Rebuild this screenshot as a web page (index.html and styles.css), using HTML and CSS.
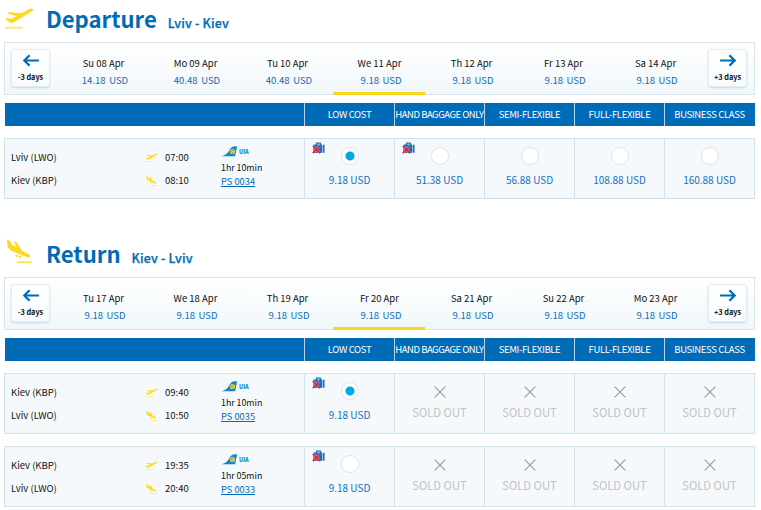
FILE: index.html
```html
<!DOCTYPE html>
<html lang="en">
<head>
  <meta charset="UTF-8">
  <meta name="viewport" content="width=device-width, initial-scale=1">
  <title>Select flights</title>
  <link rel="stylesheet" href="styles.css">
</head>
<body>

  <!-- Shared icons -->
  <svg class="sprite" aria-hidden="true">
    <symbol id="takeoff" viewBox="0 0 30 22">
      <path fill="#ffd91a" d="M2.7 5L5 4.300l12.500.9 7-4Q28-.3 29 1.200q.3 1.600-2.500 3L9.500 14.500l-3 .4L1 10.800l1.800-.9L7 11l5.500-2.800z"/>
      <path fill="#ffe873" d="M1 18.700h17.500v2H1z"/>
    </symbol>
    <symbol id="landing" viewBox="0 0 30 27">
      <path fill="#ffd91a" d="M3 1.500l1.700.2L8.300 7l4 1.800L10 3.200l2.400.7L18 13l6.500 3q2.300 1.800 1.300 3.200l-2 .3L6.500 12.500 3.600 9z"/>
      <circle cx="12.500" cy="17.700" r="1.200" fill="#ffd91a"/>
      <circle cx="16" cy="18.700" r="1.200" fill="#ffd91a"/>
      <path fill="#ffe04a" d="M12.700 23.500H28V25H12.700z"/>
    </symbol>
    <symbol id="arrow-left" viewBox="0 0 18 14">
      <path fill="none" stroke="#006bb7" stroke-width="2.4" d="M17.500 7H2M7.500 1.300L1.800 7l5.700 5.700"/>
    </symbol>
    <symbol id="arrow-right" viewBox="0 0 18 14">
      <path fill="none" stroke="#006bb7" stroke-width="2.4" d="M.5 7H16M10.500 1.300L16.200 7l-5.700 5.700"/>
    </symbol>
    <symbol id="no-bag" viewBox="0 0 13 13">
      <path fill="none" stroke="#1379c4" stroke-width="1.200" d="M4.500 3V1.100h4V3"/>
      <rect x="1.200" y="2.500" width="9.200" height="8.500" rx="1" fill="#0870bd"/>
      <path fill="#0a4f96" d="M11.200 2.800h1.300v8h-1.300z"/>
      <path stroke="#fff" stroke-width="2.600" opacity=".55" d="M.8 4l7 7M7.800 4l-7 7"/>
      <path stroke="#e41d2d" stroke-width="1.700" d="M.8 4l7.200 7.200M8 4L.8 11.200"/>
    </symbol>
    <symbol id="tail" viewBox="0 0 18 12">
      <path fill="#1686cf" d="M0 11.200Q6 10.500 9.800 3Q11.500.5 14 .3H17.300L15.200 11.200Z"/>
      <circle cx="12.200" cy="6" r="2.800" fill="#f4d93a"/>
      <path fill="none" stroke="#1686cf" stroke-width=".9" d="M13.300 5.200a1.300 1.300 0 1 0 0 1.700"/>
    </symbol>
    <symbol id="cross" viewBox="0 0 12 12">
      <path stroke="#999" stroke-width="1.100" d="M.7.7l10.600 10.600M11.300.7L.7 11.300"/>
    </symbol>
  </svg>

  <!-- Departure -->
  <section class="trip">
    <div class="trip-title">
      <svg class="title-icon title-takeoff"><use href="#takeoff"/></svg>
      <h2>Departure</h2>
      <span class="route">Lviv - Kiev</span>
    </div>
    <div class="dates">
      <button class="shift"><svg><use href="#arrow-left"/></svg>-3 days</button>
      <div class="date">Su 08 Apr<span>14.18 USD</span></div>
      <div class="date">Mo 09 Apr<span>40.48 USD</span></div>
      <div class="date">Tu 10 Apr<span>40.48 USD</span></div>
      <div class="date active">We 11 Apr<span>9.18 USD</span></div>
      <div class="date">Th 12 Apr<span>9.18 USD</span></div>
      <div class="date">Fr 13 Apr<span>9.18 USD</span></div>
      <div class="date">Sa 14 Apr<span>9.18 USD</span></div>
      <button class="shift"><svg><use href="#arrow-right"/></svg>+3 days</button>
    </div>
    <div class="fare-head">
      <div></div>
      <div>LOW COST</div>
      <div class="long">HAND BAGGAGE ONLY</div>
      <div>SEMI-FLEXIBLE</div>
      <div>FULL-FLEXIBLE</div>
      <div>BUSINESS CLASS</div>
    </div>
    <div class="flight">
      <div class="info">
        <div class="cities"><div>Lviv (LWO)</div><div>Kiev (KBP)</div></div>
        <div class="times">
          <div><svg class="up"><use href="#takeoff"/></svg>07:00</div>
          <div><svg class="down"><use href="#landing"/></svg>08:10</div>
        </div>
        <div class="carrier">
          <div class="airline"><svg><use href="#tail"/></svg>UIA</div>
          <div>1hr 10min</div>
          <a href="#">PS 0034</a>
        </div>
      </div>
      <div class="fare"><svg class="no-bag"><use href="#no-bag"/></svg><i class="radio checked"></i>9.18 USD</div>
      <div class="fare"><svg class="no-bag"><use href="#no-bag"/></svg><i class="radio"></i>51.38 USD</div>
      <div class="fare"><i class="radio"></i>56.88 USD</div>
      <div class="fare"><i class="radio"></i>108.88 USD</div>
      <div class="fare"><i class="radio"></i>160.88 USD</div>
    </div>
  </section>

  <!-- Return -->
  <section class="trip">
    <div class="trip-title">
      <svg class="title-icon title-landing"><use href="#landing"/></svg>
      <h2>Return</h2>
      <span class="route">Kiev - Lviv</span>
    </div>
    <div class="dates">
      <button class="shift"><svg><use href="#arrow-left"/></svg>-3 days</button>
      <div class="date">Tu 17 Apr<span>9.18 USD</span></div>
      <div class="date">We 18 Apr<span>9.18 USD</span></div>
      <div class="date">Th 19 Apr<span>9.18 USD</span></div>
      <div class="date active">Fr 20 Apr<span>9.18 USD</span></div>
      <div class="date">Sa 21 Apr<span>9.18 USD</span></div>
      <div class="date">Su 22 Apr<span>9.18 USD</span></div>
      <div class="date">Mo 23 Apr<span>9.18 USD</span></div>
      <button class="shift"><svg><use href="#arrow-right"/></svg>+3 days</button>
    </div>
    <div class="fare-head">
      <div></div>
      <div>LOW COST</div>
      <div class="long">HAND BAGGAGE ONLY</div>
      <div>SEMI-FLEXIBLE</div>
      <div>FULL-FLEXIBLE</div>
      <div>BUSINESS CLASS</div>
    </div>
    <div class="flight">
      <div class="info">
        <div class="cities"><div>Kiev (KBP)</div><div>Lviv (LWO)</div></div>
        <div class="times">
          <div><svg class="up"><use href="#takeoff"/></svg>09:40</div>
          <div><svg class="down"><use href="#landing"/></svg>10:50</div>
        </div>
        <div class="carrier">
          <div class="airline"><svg><use href="#tail"/></svg>UIA</div>
          <div>1hr 10min</div>
          <a href="#">PS 0035</a>
        </div>
      </div>
      <div class="fare"><svg class="no-bag"><use href="#no-bag"/></svg><i class="radio checked"></i>9.18 USD</div>
      <div class="fare sold"><svg><use href="#cross"/></svg>SOLD OUT</div>
      <div class="fare sold"><svg><use href="#cross"/></svg>SOLD OUT</div>
      <div class="fare sold"><svg><use href="#cross"/></svg>SOLD OUT</div>
      <div class="fare sold"><svg><use href="#cross"/></svg>SOLD OUT</div>
    </div>
    <div class="flight">
      <div class="info">
        <div class="cities"><div>Kiev (KBP)</div><div>Lviv (LWO)</div></div>
        <div class="times">
          <div><svg class="up"><use href="#takeoff"/></svg>19:35</div>
          <div><svg class="down"><use href="#landing"/></svg>20:40</div>
        </div>
        <div class="carrier">
          <div class="airline"><svg><use href="#tail"/></svg>UIA</div>
          <div>1hr 05min</div>
          <a href="#">PS 0033</a>
        </div>
      </div>
      <div class="fare"><svg class="no-bag"><use href="#no-bag"/></svg><i class="radio"></i>9.18 USD</div>
      <div class="fare sold"><svg><use href="#cross"/></svg>SOLD OUT</div>
      <div class="fare sold"><svg><use href="#cross"/></svg>SOLD OUT</div>
      <div class="fare sold"><svg><use href="#cross"/></svg>SOLD OUT</div>
      <div class="fare sold"><svg><use href="#cross"/></svg>SOLD OUT</div>
    </div>
  </section>

</body>
</html>
```

FILE: styles.css
```css
* {
  box-sizing: border-box;
}
body {
  margin: 0;
  padding: 0 6px 0 4px;
  width: 761px;
  height: 510px;
  overflow: hidden;
  background: #fff;
  color: #111;
  font-family: "Noto Sans CJK SC", "Open Sans", sans-serif;
  font-size: 9.5px;
}
.sprite {
  display: none;
}
svg {
  display: block;
  flex: none;
}

/* Section title */
.trip {
  height: 235px;
}
.trip-title {
  display: flex;
  height: 42px;
  align-items: flex-start;
  color: #006bb7;
}
.title-icon {
  width: 30px;
  margin-right: 12px;
}
.title-takeoff {
  height: 22px;
  margin-top: 8px;
}
.title-landing {
  height: 27px;
  margin-top: 3px;
}
.trip-title h2 {
  margin: 0 11px 0 0;
  font-size: 22.1px;
  font-weight: 700;
  line-height: 37px;
}
.route {
  font-size: 12.5px;
  font-weight: 500;
  line-height: 45px;
  letter-spacing: .15px;
  -webkit-text-stroke: .25px #006bb7;
}

/* Date strip */
.dates {
  display: flex;
  height: 53px;
  padding: 0 7px 0 6px;
  border: 1px solid #d9e5ec;
  background: linear-gradient(#fff, #f1f7fa);
}
.shift {
  display: flex;
  flex-direction: column;
  align-items: center;
  width: 39px;
  height: 38px;
  margin: 6px 0 0;
  padding: 4px 0 0;
  border: 1px solid #e3ecf2;
  border-radius: 3px;
  background: linear-gradient(#fff, #f8fbfd);
  box-shadow: 0 1px 2px #ccd8e0;
  color: #111;
  font: 700 7.3px/12px "Noto Sans CJK SC", sans-serif;
  white-space: nowrap;
}
.shift svg {
  width: 18px;
  height: 13px;
  margin-bottom: 4px;
}
.date {
  width: 92px;
  padding: 12px 0 0 1px;
  border-bottom: 3px solid transparent;
  margin-bottom: -1px;
  text-align: center;
  line-height: 17px;
}
.date:nth-child(2) {
  margin-left: 7px;
}
.date:nth-child(8) {
  margin-right: 7px;
}
.date span {
  display: block;
  padding-left: 3px;
  color: #0b6cb8;
  word-spacing: 1.5px;
}
.date.active {
  border-bottom-color: #fad71e;
}

/* Fare table */
.fare-head,
.flight {
  display: grid;
  grid-template-columns: 299px 90px 90px 90px 90px 90px;
}
.fare-head {
  height: 23px;
  margin: 8px 0 12px 1px;
  background: #006bb7;
  color: #fff;
  font-size: 9.5px;
  line-height: 22px;
  letter-spacing: -.35px;
  text-align: center;
  white-space: nowrap;
}
.fare-head div + div {
  border-left: 1px solid #b9d5e8;
}
.fare-head .long {
  letter-spacing: -.48px;
}
.flight {
  height: 61px;
  width: 751px;
  margin-bottom: 12px;
  border: 1px solid #d3e2ea;
  background: #f5f9fc;
}
.info {
  display: flex;
}
.cities {
  width: 134px;
  padding: 7px 0 0 6px;
  line-height: 23px;
}
.times {
  width: 82px;
  padding: 7px 0 0 6px;
  line-height: 23px;
}
.times div {
  display: flex;
  align-items: center;
}
.times svg {
  width: 13px;
  height: 12px;
  margin-right: 7px;
}
.carrier {
  padding-top: 7px;
  font-size: 8.8px;
  line-height: 13px;
}
.carrier a {
  color: #006bb7;
  font-size: 9.3px;
  line-height: 14px;
}
.airline {
  display: flex;
  height: 15px;
  color: #1780c8;
  font-size: 5.5px;
  font-weight: 900;
}
.airline svg {
  width: 17px;
  height: 11px;
  margin-right: 1px;
}

.fare {
  position: relative;
  display: flex;
  flex-direction: column;
  align-items: center;
  padding-top: 8px;
  border-left: 1px solid #d3e2ea;
  color: #1770bc;
  font-size: 10px;
  line-height: 16px;
}
.no-bag {
  position: absolute;
  left: 7px;
  top: 3px;
  width: 13px;
  height: 13px;
}
.radio {
  width: 18px;
  height: 18px;
  margin-bottom: 7px;
  border: 1px solid #dbe5eb;
  border-radius: 50%;
  background: #fff;
}
.radio.checked {
  background: radial-gradient(circle, #00a7e5 4px, #fff 5px);
}
.sold {
  padding-top: 12px;
  color: #c0c3c5;
  font-size: 11.2px;
}
.sold svg {
  width: 12px;
  height: 12px;
  margin-bottom: 6px;
}
```
